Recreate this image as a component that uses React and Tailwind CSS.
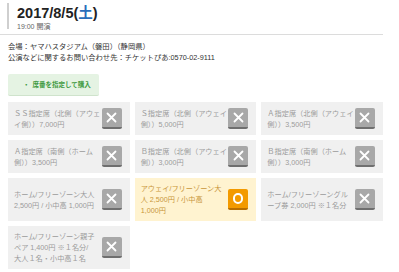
import React from "react";

const FONT = { fontFamily: '"Liberation Sans", "Noto Sans CJK JP", sans-serif' };

const cards = [
  { t: ["ＳＳ指定席（北側（アウェ", "イ側））7,000円"], ok: false },
  { t: ["Ｓ指定席（北側（アウェイ", "側））5,000円"], ok: false },
  { t: ["Ａ指定席（北側（アウェイ", "側））3,500円"], ok: false },
  { t: ["Ａ指定席（南側（ホーム", "側））3,500円"], ok: false },
  { t: ["Ｂ指定席（北側（アウェイ", "側））3,000円"], ok: false },
  { t: ["Ｂ指定席（南側（ホーム", "側））3,000円"], ok: false },
  { t: ["ホーム/フリーゾーン大人", "2,500円 / 小中高 1,000円"], ok: false },
  { t: ["アウェイ/フリーゾーン大", "人 2,500円 / 小中高", "1,000円"], ok: true },
  { t: ["ホーム/フリーゾーングル", "ープ券 2,000円 ※１名分"], ok: false },
  { t: ["ホーム/フリーゾーン親子", "ペア 1,400円 ※１名分/", "大人１名・小中高１名"], ok: false },
];

function XBtn() {
  return (
    <div className="w-[20px] h-[21px] shrink-0 rounded-[2px] bg-[#a8a8a8] border-b-[2px] border-[#6f6f6f] flex items-center justify-center">
      <svg width="11" height="11" viewBox="0 0 11 11">
        <path d="M1.5 1.5 L9.5 9.5 M9.5 1.5 L1.5 9.5" stroke="#fff" strokeWidth="1.8" strokeLinecap="round" />
      </svg>
    </div>
  );
}

function OBtn() {
  return (
    <div className="w-[20px] h-[21px] shrink-0 rounded-[2px] bg-[#f39a00] border-b-[2px] border-[#b86e00] flex items-center justify-center">
      <div className="w-[10px] h-[11px] rounded-full border-[2px] border-white" />
    </div>
  );
}

export default function App() {
  return (
    <div className="w-[399px] h-[272px] bg-white overflow-hidden" style={FONT}>
      <div className="w-[383px]">
        <div className="pt-[3px] pl-[7px]">
          <div className="border-l-[2px] border-[#cfcfcf] pl-[8px] h-[26px]">
            <div className="text-[14.5px] font-bold leading-[17px] text-[#222] pt-[2px]">
              2017/8/5(<span className="text-[#2a6ebb]">土</span>)
            </div>
            <div className="text-[7px] leading-[8px] text-[#666] mt-[1px]">19:00 開演</div>
          </div>
        </div>
        <div className="h-px bg-[#dcdcdc] mt-[5px]" />
        <div className="pl-[8px] pt-[6px] text-[7.3px] leading-[11px] text-[#333]">
          <div>会場：ヤマハスタジアム（磐田）（静岡県）</div>
          <div>公演などに関するお問い合わせ先：チケットぴあ:0570-02-9111</div>
        </div>
        <div className="pl-[8px] pt-[11px]">
          <div className="w-[91px] h-[22px] bg-[#e5f3e3] rounded-[2px] border-b-[1px] border-[#cfe3cc] flex items-center pl-[15px] text-[6.5px] font-bold text-[#3f9a3f]">
            <span className="mr-[3px]">・</span>席番を指定して購入
          </div>
        </div>
        <div className="pl-[8px] pt-[6px] grid grid-cols-3 gap-x-[5px] gap-y-[5px]">
          {cards.map((c, i) => (
            <div
              key={i}
              className={
                "flex items-center justify-between pl-[6px] pr-[8px] py-[5px] min-h-[33px] " +
                (c.ok ? "bg-[#fff3d0] text-[#c9963a]" : "bg-[#f0f0f0] text-[#9b9b9b]")
              }
            >
              <div className="text-[7.2px] leading-[11px]">
                {c.t.map((l, j) => (
                  <div key={j} className="whitespace-nowrap">{l}</div>
                ))}
              </div>
              {c.ok ? <OBtn /> : <XBtn />}
            </div>
          ))}
        </div>
      </div>
    </div>
  );
}
